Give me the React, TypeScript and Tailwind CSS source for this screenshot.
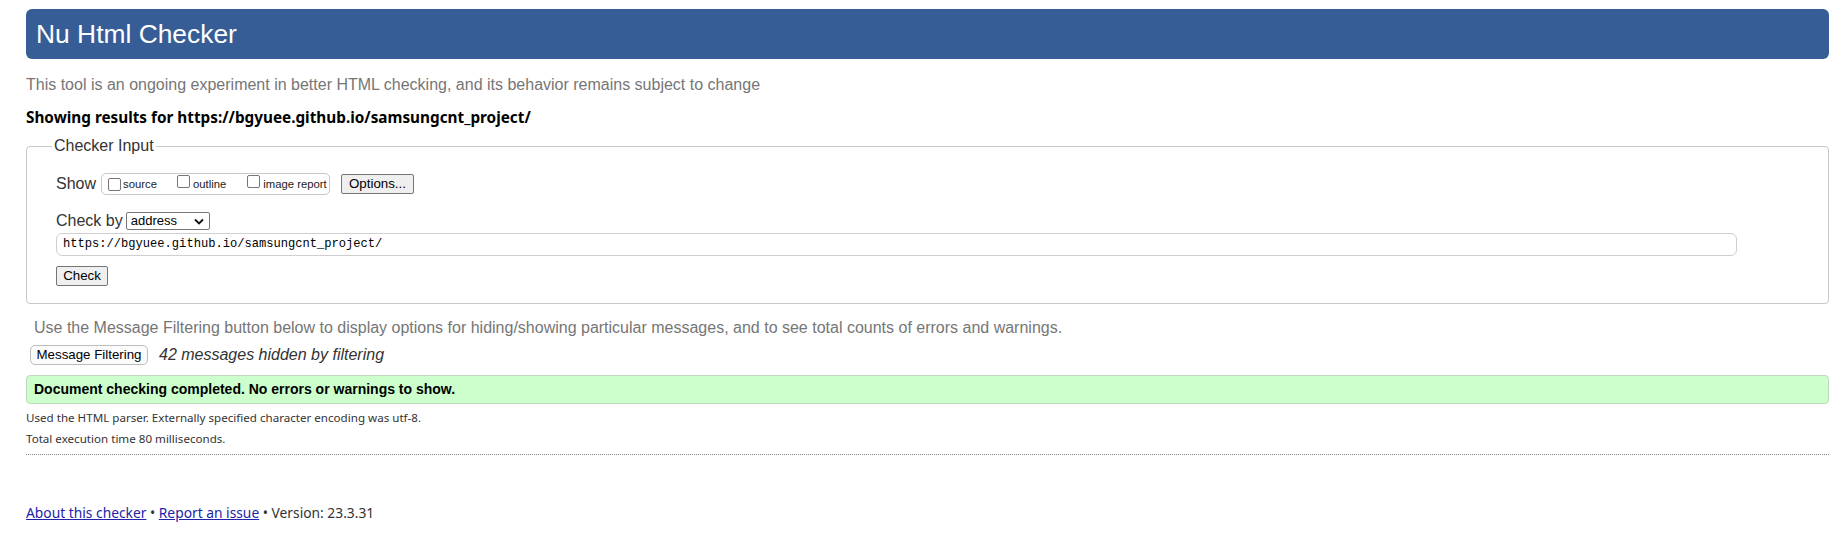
import type React from "react";

const Checkbox: React.FC = () => (
	<span className="inline-block w-[13px] h-[13px] border border-[#767676] rounded-[2px] bg-white shrink-0" />
);

const App: React.FC = () => {
	return (
		<div className="min-h-[548px] bg-white pl-[26px] pr-[5px] pt-[9px] font-['Liberation_Sans',Arial,sans-serif] text-[#111]">
			{/* Title bar */}
			<div className="h-[50px] rounded-[6px] bg-[#365d95] flex items-center pl-[10px]">
				<h1 className="text-white text-[26.4px] font-normal leading-none">Nu Html Checker</h1>
			</div>

			<p className="mt-[16px] text-[16px] leading-[20px] text-[#767676]">
				This tool is an ongoing experiment in better HTML checking, and its behavior remains subject to change
			</p>
			<p className="mt-[12px] text-[15.3px] leading-[20px] font-bold font-['Noto_Sans',sans-serif] text-black">
				Showing results for https://bgyuee.github.io/samsungcnt_project/
			</p>

			{/* Checker input */}
			<fieldset className="mt-[9px] border border-[#c8c8c8] rounded-[4px] pl-[29px] pt-[17px] pb-[17px]">
				<legend className="ml-[-4px] px-[2px] text-[16px] leading-[20px] text-[#333]">Checker Input</legend>

				<div className="flex items-center h-[22px]">
					<span className="text-[16px] text-[#333] mr-[5px]">Show</span>
					<div className="flex items-center h-[22px] w-[229px] border border-[#c8c8c8] rounded-[5px] pl-[6px] text-[11.3px] text-[#222]">
						<Checkbox />
						<span className="ml-[2px]">source</span>
						<span className="ml-[20px]">
							<Checkbox />
						</span>
						<span className="ml-[3px]">outline</span>
						<span className="ml-[21px]">
							<Checkbox />
						</span>
						<span className="ml-[3px]">image report</span>
					</div>
					<button
						type="button"
						className="ml-[11px] h-[20px] px-[7px] bg-[#efefef] border border-[#767676] rounded-[2px] text-[13.3px] text-black leading-none"
					>
						Options...
					</button>
				</div>

				<div className="mt-[16px] flex items-center h-[20px]">
					<span className="text-[16px] text-[#333] mr-[3px]">Check by</span>
					<div className="flex items-center justify-between w-[84px] h-[18px] border border-[#767676] rounded-[2px] pl-[4px] pr-[5px] text-[13px] text-black">
						<span>address</span>
						<svg width="10" height="7" viewBox="0 0 10 7">
							<path d="M1 1.5 L5 5.5 L9 1.5" fill="none" stroke="#111" strokeWidth="1.8" />
						</svg>
					</div>
				</div>

				<div className="mt-[2px] h-[23px] w-[1681px] border border-[#cfcfcf] rounded-[6px] flex items-center pl-[6px] font-['Liberation_Mono',monospace] text-[12.1px] text-black">
					https://bgyuee.github.io/samsungcnt_project/
				</div>

				<button
					type="button"
					className="mt-[10px] block h-[20px] w-[52px] bg-[#efefef] border border-[#767676] rounded-[2px] text-[13.3px] text-black leading-none"
				>
					Check
				</button>
			</fieldset>

			<p className="mt-[14px] pl-[8px] text-[16px] leading-[20px] text-[#767676]">
				Use the Message Filtering button below to display options for hiding/showing particular messages, and to see total counts of errors and warnings.
			</p>

			<div className="mt-[5px] flex items-center pl-[4px]">
				<button
					type="button"
					className="h-[20px] w-[118px] bg-[#fbfbfb] border border-[#bdbdbd] rounded-[5px] text-[13.3px] text-black leading-none"
				>
					Message Filtering
				</button>
				<span className="ml-[11px] text-[16px] italic text-[#333]">42 messages hidden by filtering</span>
			</div>

			<div className="mt-[8px] h-[29px] flex items-center bg-[#ccffcc] border border-[#bfd8bf] rounded-[4px] pl-[7px]">
				<p className="text-[14px] font-bold text-black">Document checking completed. No errors or warnings to show.</p>
			</div>

			<div className="mt-[4px] font-['Noto_Sans',sans-serif] text-[11.6px] text-[#333]">
				<p className="leading-[20px]">Used the HTML parser. Externally specified character encoding was utf-8.</p>
				<p className="leading-[21px]">Total execution time 80 milliseconds.</p>
			</div>

			<hr className="mt-[5px] border-0 border-t border-dotted border-[#888]" />

			<p className="mt-[48px] font-['Noto_Sans',sans-serif] text-[13.8px] leading-[20px] text-[#333]">
				<a href="#" className="text-[#2323a8] underline">
					About this checker
				</a>
				{" \u2022 "}
				<a href="#" className="text-[#2323a8] underline">
					Report an issue
				</a>
				{" \u2022 Version: 23.3.31"}
			</p>
		</div>
	);
};

export default App;
